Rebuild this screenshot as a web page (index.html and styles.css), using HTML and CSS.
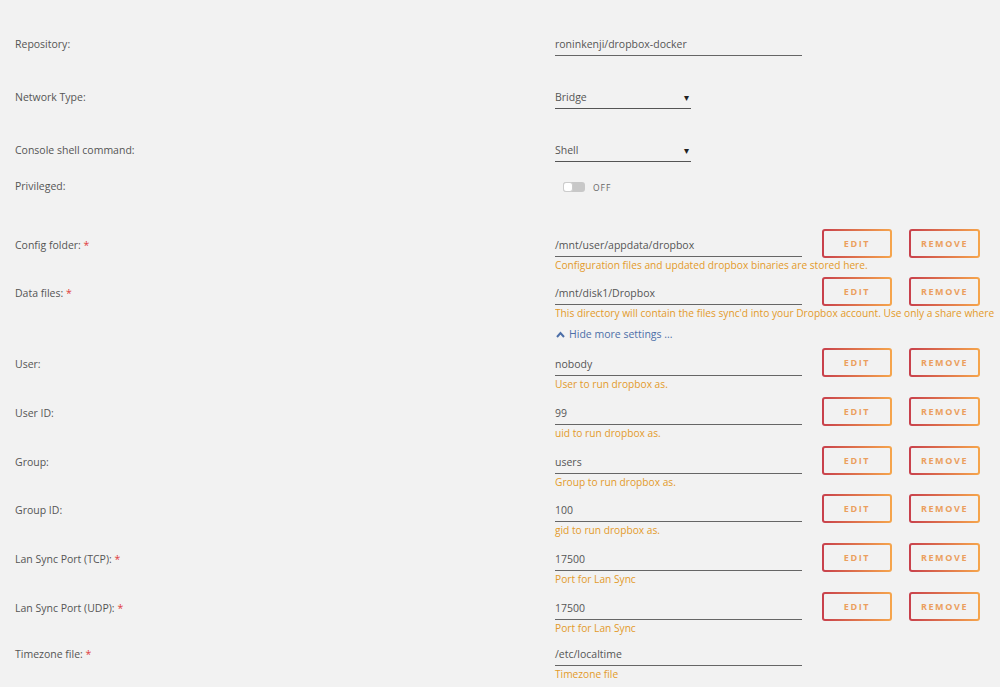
FILE: index.html
```html
<!DOCTYPE html>
<html lang="en">
<head>
    <meta charset="UTF-8">
    <title>Dropbox container settings</title>
    <link rel="stylesheet" href="styles.css">
</head>
<body>
<div class="form">
    <div class="row r-top">
        <div class="label">Repository:</div>
        <div class="field"><div class="value">roninkenji/dropbox-docker</div></div>
    </div>
    <div class="row r-top">
        <div class="label">Network Type:</div>
        <div class="select">Bridge<span class="caret">&#9662;</span></div>
    </div>
    <div class="row r-shell">
        <div class="label">Console shell command:</div>
        <div class="select">Shell<span class="caret">&#9662;</span></div>
    </div>
    <div class="row r-priv">
        <div class="label">Privileged:</div>
        <div class="toggle"><span class="track"><span class="knob"></span></span><span class="off">OFF</span></div>
    </div>
    <!--路径-->
    <div class="row r-path">
        <div class="label">Config folder: <span class="req">*</span></div>
        <div class="field">
            <div class="value">/mnt/user/appdata/dropbox</div>
            <div class="hint">Configuration files and updated dropbox binaries are stored here.</div>
        </div>
        <div class="btns"><span class="btn edit">EDIT</span><span class="btn remove">REMOVE</span></div>
    </div>
    <div class="row r-data">
        <div class="label">Data files: <span class="req">*</span></div>
        <div class="field">
            <div class="value">/mnt/disk1/Dropbox</div>
            <div class="hint wide">This directory will contain the files sync'd into your Dropbox account. Use only a share where</div>
        </div>
        <div class="btns"><span class="btn edit">EDIT</span><span class="btn remove">REMOVE</span></div>
    </div>
    <div class="row r-more">
        <div class="label"></div>
        <a class="more" href="#"><svg width="9" height="7" viewBox="0 0 9 7"><path d="M1 6 L4.5 2 L8 6" fill="none" stroke="#4d6fa8" stroke-width="2"/></svg>Hide more settings ...</a>
    </div>
    <!--变量-->
    <div class="row">
        <div class="label">User:</div>
        <div class="field">
            <div class="value">nobody</div>
            <div class="hint">User to run dropbox as.</div>
        </div>
        <div class="btns"><span class="btn edit">EDIT</span><span class="btn remove">REMOVE</span></div>
    </div>
    <div class="row">
        <div class="label">User ID:</div>
        <div class="field">
            <div class="value">99</div>
            <div class="hint">uid to run dropbox as.</div>
        </div>
        <div class="btns"><span class="btn edit">EDIT</span><span class="btn remove">REMOVE</span></div>
    </div>
    <div class="row r-short">
        <div class="label">Group:</div>
        <div class="field">
            <div class="value">users</div>
            <div class="hint">Group to run dropbox as.</div>
        </div>
        <div class="btns"><span class="btn edit">EDIT</span><span class="btn remove">REMOVE</span></div>
    </div>
    <div class="row">
        <div class="label">Group ID:</div>
        <div class="field">
            <div class="value">100</div>
            <div class="hint">gid to run dropbox as.</div>
        </div>
        <div class="btns"><span class="btn edit">EDIT</span><span class="btn remove">REMOVE</span></div>
    </div>
    <div class="row">
        <div class="label">Lan Sync Port (TCP): <span class="req">*</span></div>
        <div class="field">
            <div class="value">17500</div>
            <div class="hint">Port for Lan Sync</div>
        </div>
        <div class="btns"><span class="btn edit">EDIT</span><span class="btn remove">REMOVE</span></div>
    </div>
    <div class="row r-udp">
        <div class="label">Lan Sync Port (UDP): <span class="req">*</span></div>
        <div class="field">
            <div class="value">17500</div>
            <div class="hint">Port for Lan Sync</div>
        </div>
        <div class="btns"><span class="btn edit">EDIT</span><span class="btn remove">REMOVE</span></div>
    </div>
    <div class="row">
        <div class="label">Timezone file: <span class="req">*</span></div>
        <div class="field">
            <div class="value">/etc/localtime</div>
            <div class="hint">Timezone file</div>
        </div>
    </div>
</div>
</body>
</html>
```

FILE: styles.css
```css
* {
    margin: 0;
    padding: 0;
    box-sizing: border-box;
}

html, body {
    height: 100%;
    overflow: hidden;
}

body {
    background-color: #f2f2f2;
    font-family: "Open Sans", "Noto Sans", sans-serif;
    font-size: 10.5px;
    color: #555;
}

.form {
    padding: 35px 0 0 15px;
}

.row {
    display: flex;
    align-items: flex-start;
    height: 49px;
}

.r-top {
    height: 53px;
}

.r-shell {
    height: 36px;
}

.r-priv {
    height: 59px;
}

.r-path,
.r-short {
    height: 48px;
}

.r-data {
    height: 41px;
}

.r-more {
    height: 30px;
}

.r-udp {
    height: 46px;
}

.label {
    width: 540px;
    flex: none;
    line-height: 18px;
}

.req {
    color: #e03c3c;
}

.field {
    width: 247px;
    flex: none;
}

.value {
    height: 21px;
    line-height: 18px;
    border-bottom: 1px solid #666;
    white-space: nowrap;
}

.hint {
    color: #e39a2a;
    font-size: 10.2px;
    line-height: 17px;
    white-space: nowrap;
}

.wide {
    width: 445px;
    overflow: hidden;
}

.select {
    width: 136px;
    height: 21px;
    line-height: 18px;
    border-bottom: 1px solid #555;
    display: flex;
    justify-content: space-between;
}

.caret {
    color: #222;
    font-size: 10px;
    padding-right: 2px;
}

.toggle {
    display: flex;
    align-items: center;
    height: 20px;
    padding-left: 8px;
}

.track {
    width: 22px;
    height: 10px;
    border-radius: 3px;
    background-color: #c8c8c8;
    position: relative;
}

.knob {
    position: absolute;
    left: 0;
    top: 0;
    width: 10px;
    height: 10px;
    border-radius: 3px;
    background-color: #fff;
    border: 1px solid #ccc;
}

.off {
    margin-left: 8px;
    font-size: 8.5px;
    letter-spacing: 1px;
    color: #666;
}

.btns {
    display: flex;
    gap: 17px;
    margin: -7px 0 0 20px;
}

.btn {
    height: 29px;
    line-height: 25px;
    text-align: center;
    font-size: 9px;
    font-weight: bold;
    letter-spacing: 1.6px;
    color: #eb9f5e;
    border: 2px solid transparent;
    border-radius: 3px;
    background: linear-gradient(#f2f2f2, #f2f2f2) padding-box,
                linear-gradient(90deg, #c8404c, #f6a64c) border-box;
}

.edit {
    width: 70px;
}

.remove {
    width: 71px;
}

.more {
    display: flex;
    align-items: center;
    height: 18px;
    color: #4d6fa8;
    text-decoration: none;
    padding-left: 1px;
}

.more svg {
    margin-right: 4px;
}
```
